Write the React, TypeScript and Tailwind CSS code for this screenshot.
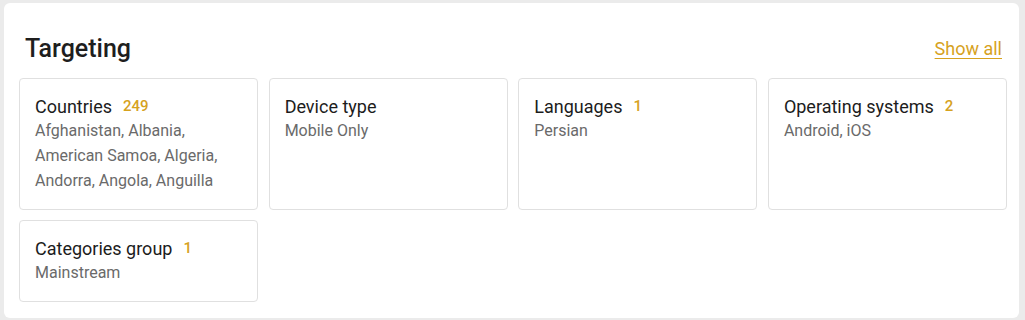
import React from 'react';

type Target = { label: string; count?: number; values: string };

const TARGETS: Target[] = [
  { label: 'Countries', count: 249, values: 'Afghanistan, Albania, American Samoa, Algeria, Andorra, Angola, Anguilla' },
  { label: 'Device type', values: 'Mobile Only' },
  { label: 'Languages', count: 1, values: 'Persian' },
  { label: 'Operating systems', count: 2, values: 'Android, iOS' },
  { label: 'Categories group', count: 1, values: 'Mainstream' },
];

const TargetCard: React.FC<{ item: Target }> = ({ item }) => (
  <div className="rounded-[4px] border border-[#e0e0e0] bg-white px-[15px] pt-[16px] pb-[16px]">
    <div className="flex items-center h-[23px]">
      <span className="text-[18px] leading-[23px] text-[#1c1c1c]">{item.label}</span>
      {item.count !== undefined && (
        <span className="ml-[11px] text-[15px] leading-[23px] font-medium text-[#d6a21e]">{item.count}</span>
      )}
    </div>
    <p className="text-[16px] leading-[25px] text-[#6a6a6a]">{item.values}</p>
  </div>
);

export default function App() {
  return (
    <div className="min-h-[320px] bg-[#ebebeb] pt-[3px] pl-[4px] pr-[6px] pb-[3px] font-['Roboto',sans-serif]">
      <section className="rounded-[6px] bg-white pt-[30px] pl-[15px] pr-[12px] pb-[16px]">
        {/* Header */}
        <div className="flex items-center justify-between h-[32px] pl-[6px] pr-[5px]">
          <h2 className="text-[25px] leading-[32px] font-medium text-[#1e1e1e]">Targeting</h2>
          <a href="#targeting" className="text-[18px] leading-[24px] text-[#d6a21e] underline underline-offset-[3px]">
            Show all
          </a>
        </div>

        {/* Target cards */}
        <div className="mt-[13px] grid grid-cols-4 gap-x-[10.5px] gap-y-[10px] items-stretch">
          {TARGETS.map((t) => (
            <TargetCard key={t.label} item={t} />
          ))}
        </div>
      </section>
    </div>
  );
}
